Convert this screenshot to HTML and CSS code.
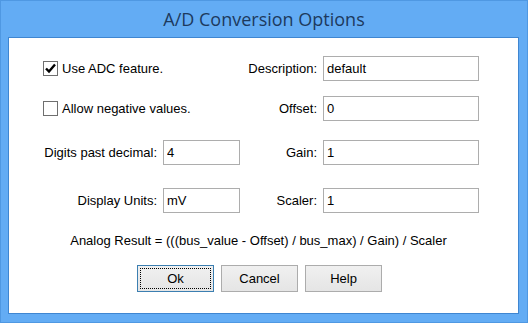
FILE: index.html
```html
<!DOCTYPE html>
<html lang="en">
<head>
<meta charset="UTF-8">
<title>A/D Conversion Options</title>
<link rel="stylesheet" href="styles.css">
</head>
<body>
<div class="window" role="dialog" aria-labelledby="dlgtitle">
  <div class="titlebar" id="dlgtitle">A/D Conversion Options</div>
  <div class="client">
    <div class="form">
      <div class="row first">
        <label class="check"><span class="box"><svg width="13" height="13" viewBox="0 0 13 13"><path d="M2 6.5 L5 9.5 L11 2.5" fill="none" stroke="#000" stroke-width="2.4"/></svg></span>Use ADC feature.</label>
        <span class="label">Description:</span>
        <input class="field" type="text" value="default">
      </div>
      <div class="row second">
        <label class="check"><span class="box"></span>Allow negative values.</label>
        <span class="label">Offset:</span>
        <input class="field" type="text" value="0">
      </div>
      <div class="row third">
        <span class="label">Digits past decimal:</span>
        <input class="field" type="text" value="4">
        <span class="label">Gain:</span>
        <input class="field" type="text" value="1">
      </div>
      <div class="row fourth">
        <span class="label">Display Units:</span>
        <input class="field" type="text" value="mV">
        <span class="label">Scaler:</span>
        <input class="field" type="text" value="1">
      </div>
    </div>
    <p class="formula">Analog Result = (((bus_value - Offset) / bus_max) / Gain) / Scaler</p>
    <div class="buttons">
      <button class="btn default" type="button">Ok</button>
      <button class="btn" type="button">Cancel</button>
      <button class="btn" type="button">Help</button>
    </div>
  </div>
</div>
</body>
</html>
```

FILE: styles.css
```css
html, body {
  margin: 0;
  padding: 0;
}

body {
  font-family: "Liberation Sans", Arial, sans-serif;
  font-size: 13px;
  color: #000;
}

.window {
  width: 528px;
  height: 323px;
  box-sizing: border-box;
  background-color: #63acf4;
  border: 1px solid #4f98e2;
  display: flex;
  flex-direction: column;
}

.titlebar {
  height: 36px;
  line-height: 36px;
  text-align: center;
  font-family: "Open Sans", sans-serif;
  font-size: 18px;
  color: #1d3a5e;
}

.client {
  margin: 0 8px 8px 7px;
  flex: 1;
  background: #fff;
  border: 1px solid #3f86d1;
}

.form {
  padding-top: 18px;
}

.row {
  display: grid;
  grid-template-columns: 148px 77px 71px 156px;
  column-gap: 6px;
  height: 25px;
  align-items: center;
}

.second { margin-top: 15px; }
.third { margin-top: 19px; }
.fourth { margin-top: 23px; }

.label {
  text-align: right;
}

.check {
  grid-column: 1 / span 2;
  display: flex;
  align-items: center;
  padding-left: 34px;
}

.box {
  width: 13px;
  height: 13px;
  border: 1px solid #6f6f6f;
  background: #fff;
  margin-right: 4px;
  display: flex;
}

.field {
  height: 25px;
  box-sizing: border-box;
  margin: 0;
  padding: 0 3px;
  border: 1px solid #adadad;
  font-family: "Liberation Sans", Arial, sans-serif;
  font-size: 13px;
  color: #000;
  outline: none;
  width: 100%;
}

.formula {
  margin: 20px 10px 0 0;
  line-height: 16px;
  text-align: center;
}

.buttons {
  margin-top: 16px;
  display: flex;
  justify-content: center;
  gap: 7px;
  padding-right: 8px;
}

.btn {
  width: 77px;
  height: 27px;
  margin: 0;
  border: 1px solid #acacac;
  background: linear-gradient(#f0f0f0, #e5e5e5);
  font-family: "Liberation Sans", Arial, sans-serif;
  font-size: 13px;
  color: #000;
}

.btn.default {
  border-color: #3c7fb1;
  outline: 1px dotted #000;
  outline-offset: -4px;
}
```
